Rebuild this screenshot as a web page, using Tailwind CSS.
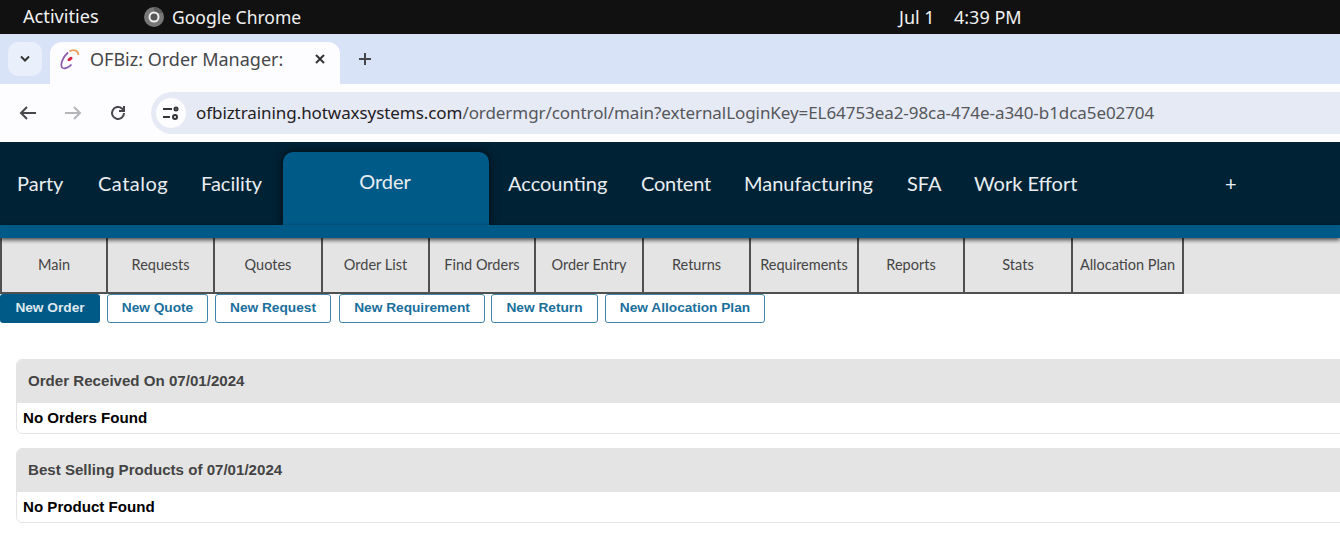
<!DOCTYPE html>
<html lang="en">
<head>
  <meta charset="UTF-8" />
  <title>OFBiz: Order Manager</title>
  <script src="https://cdn.jsdelivr.net/npm/@tailwindcss/browser@4"></script>
</head>
<body class="bg-white w-[1340px] h-[545px] overflow-hidden font-['Liberation_Sans',sans-serif]">

  <!-- DESKTOP TOP BAR -->
  <div class="h-[34px] bg-[#111111] flex items-center text-[#f2f2f2] text-[18px] font-['Noto_Sans',sans-serif]">
    <span class="ml-[23px] w-[121px] text-[18.200px]">Activities</span>
    <svg width="20" height="20" viewBox="0 0 20 20">
      <circle cx="10" cy="10" r="10" fill="#777777"/>
      <path d="M10 0a10 10 0 0 1 9 6h-9z" fill="#5c5c5c"/>
      <circle cx="10" cy="10" r="4.500" fill="#555555" stroke="#eeeeee" stroke-width="2"/>
    </svg>
    <span class="ml-[8px] w-[727px] text-[17.500px]">Google Chrome</span>
    <span class="whitespace-pre w-[55px]">Jul 1</span>
    <span>4:39 PM</span>
  </div>

  <!-- TAB STRIP -->
  <div class="h-[50px] bg-[#d9e3f8] flex items-end font-['Noto_Sans',sans-serif]">
    <div class="w-[34px] h-[34px] ml-[8px] mb-[8px] rounded-[10px] bg-[#e9effb] flex items-center justify-center">
      <svg width="12" height="8" viewBox="0 0 12 8" fill="none" stroke="#333" stroke-width="2"><path d="M2 1.500l4 4 4-4"/></svg>
    </div>
    <div class="w-[290px] h-[42px] ml-[8px] pb-[8px] rounded-t-[12px] bg-[#fdfcff] flex items-center pl-[10px]">
      <svg width="20" height="21" viewBox="0 0 20 21" fill="none" stroke-width="1.700">
        <path d="M9.500 2.500C12 0.500 18 0.500 18.500 6" stroke="#ec9a55"/>
        <path d="M8 3.500C3 8 0 15 2 18.500 4 20.500 9 18.500 11.500 15.500" stroke="#8d5bad"/>
        <ellipse cx="10" cy="10" rx="2.800" ry="1.600" transform="rotate(-35 10 10)" fill="#d4213d" stroke="none"/>
      </svg>
      <span class="ml-[10px] text-[18px] text-[#45474a] w-[224px] whitespace-nowrap">OFBiz: Order Manager:</span>
      <svg width="12" height="12" viewBox="0 0 12 12" fill="none" stroke="#333" stroke-width="2"><path d="M2 2l8 8M10 2l-8 8"/></svg>
    </div>
    <svg class="ml-[18px] mb-[18px]" width="14" height="14" viewBox="0 0 14 14" fill="none" stroke="#45474a" stroke-width="2"><path d="M7 1v12M1 7h12"/></svg>
  </div>

  <!-- ADDRESS BAR -->
  <div class="h-[58px] bg-[#fdfcff] flex items-center font-['Noto_Sans',sans-serif]">
    <svg class="ml-[19px]" width="18" height="16" viewBox="0 0 18 16" fill="none" stroke="#45474a" stroke-width="2"><path d="M17 8H2M8 2L2 8l6 6"/></svg>
    <svg class="ml-[27px]" width="18" height="16" viewBox="0 0 18 16" fill="none" stroke="#b5b6ba" stroke-width="2"><path d="M1 8h15M10 2l6 6-6 6"/></svg>
    <svg class="ml-[27px]" width="18" height="18" viewBox="0 0 18 18" fill="none" stroke="#45474a" stroke-width="2"><path d="M15 9a6 6 0 1 1-2-4.500L15 6.500"/><path d="M15 2v5h-5"/></svg>
    <div class="ml-[24px] w-[1189px] h-[42px] rounded-l-full bg-[#e6eaf5] flex items-center pl-[5px]">
      <span class="w-[30px] h-[30px] rounded-full bg-[#fdfcff] flex items-center justify-center">
        <svg width="16" height="14" viewBox="0 0 16 14" fill="none" stroke="#333" stroke-width="2"><path d="M0 3h9M0 11h7"/><circle cx="13" cy="3" r="1.500"/><circle cx="12" cy="11" r="2"/></svg>
      </span>
      <span class="ml-[10px] text-[17px] tracking-[-0.07px] text-[#55575b] whitespace-nowrap"><span class="text-[#1f2023]">ofbiztraining.hotwaxsystems.com</span>/ordermgr/control/main?externalLoginKey=EL64753ea2-98ca-474e-a340-b1dca5e02704</span>
    </div>
  </div>

  <!-- MAIN NAV -->
  <nav class="h-[83px] pl-[17px] bg-[#002235] flex text-[20px] text-[#e8eef2] font-['Lato',sans-serif]">
    <a class="w-[81px] pt-[26px]">Party</a>
    <a class="w-[103px] pt-[26px] tracking-[0.5px]">Catalog</a>
    <a class="w-[82px] pt-[26px]">Facility</a>
    <a class="mt-[10px] w-[206px] h-[73px] pr-[2px] bg-[#005a87] rounded-t-[10px] text-center pt-[14px] shadow-[0_0_10px_rgba(0,0,0,0.7)]">Order</a>
    <a class="ml-[19px] w-[133px] pt-[26px]">Accounting</a>
    <a class="w-[103px] pt-[26px] tracking-[-0.2px]">Content</a>
    <a class="w-[163px] pt-[26px]">Manufacturing</a>
    <a class="w-[67px] pt-[26px]">SFA</a>
    <a class="w-[251px] pt-[26px]">Work Effort</a>
    <a class="pt-[26px]">+</a>
  </nav>
  <div class="h-[13px] bg-[#005a87] relative z-10 shadow-[0_2px_4px_rgba(0,0,0,0.7)]"></div>

  <!-- SUB NAV -->
  <div class="h-[56px] bg-[#e4e4e4] flex text-[14.500px] text-[#444444] font-['Lato',sans-serif]">
    <a class="w-[108px] border-x-2 border-b-2 border-[#505050] flex items-center justify-center">Main</a>
    <a class="w-[107px] border-r-2 border-b-2 border-[#505050] flex items-center justify-center">Requests</a>
    <a class="w-[108px] border-r-2 border-b-2 border-[#505050] flex items-center justify-center">Quotes</a>
    <a class="w-[107px] border-r-2 border-b-2 border-[#505050] flex items-center justify-center">Order List</a>
    <a class="w-[106px] border-r-2 border-b-2 border-[#505050] flex items-center justify-center">Find Orders</a>
    <a class="w-[108px] border-r-2 border-b-2 border-[#505050] flex items-center justify-center">Order Entry</a>
    <a class="w-[107px] border-r-2 border-b-2 border-[#505050] flex items-center justify-center">Returns</a>
    <a class="w-[108px] border-r-2 border-b-2 border-[#505050] flex items-center justify-center">Requirements</a>
    <a class="w-[106px] border-r-2 border-b-2 border-[#505050] flex items-center justify-center">Reports</a>
    <a class="w-[108px] border-r-2 border-b-2 border-[#505050] flex items-center justify-center">Stats</a>
    <a class="w-[111px] border-r-2 border-b-2 border-[#505050] flex items-center justify-center">Allocation Plan</a>
  </div>

  <!-- ACTION BUTTONS -->
  <div class="h-[29px] flex text-[13.700px] font-bold text-[#1a6f9c]">
    <a class="w-[100px] rounded-[3px] bg-[#005a87] text-[#dfe9ef] pb-[1px] flex items-center justify-center">New Order</a>
    <a class="ml-[7px] w-[101px] rounded-[3px] border border-[#3f86aa] pb-[1px] flex items-center justify-center">New Quote</a>
    <a class="ml-[7px] w-[116px] rounded-[3px] border border-[#3f86aa] pb-[1px] flex items-center justify-center">New Request</a>
    <a class="ml-[8px] w-[146px] rounded-[3px] border border-[#3f86aa] pb-[1px] flex items-center justify-center">New Requirement</a>
    <a class="ml-[6px] w-[107px] rounded-[3px] border border-[#3f86aa] pb-[1px] flex items-center justify-center">New Return</a>
    <a class="ml-[7px] w-[160px] rounded-[3px] border border-[#3f86aa] pb-[1px] flex items-center justify-center">New Allocation Plan</a>
  </div>

  <!-- CARDS -->
  <div class="ml-[16px] mt-[36px] w-[1340px] flex flex-col gap-[14px]">
    <div class="h-[75px] rounded-[6px] border border-[#e4e4e4] overflow-hidden">
      <div class="h-[43px] bg-[#e4e4e4] flex items-center pl-[11px] text-[15.100px] font-bold text-[#444444]">Order Received On 07/01/2024</div>
      <div class="pl-[6px] pt-[4px] text-[15.100px] font-bold text-black">No Orders Found</div>
    </div>
    <div class="h-[75px] rounded-[6px] border border-[#e4e4e4] overflow-hidden">
      <div class="h-[43px] bg-[#e4e4e4] flex items-center pl-[11px] text-[15.100px] font-bold text-[#444444]">Best Selling Products of 07/01/2024</div>
      <div class="pl-[6px] pt-[4px] text-[15.100px] font-bold text-black">No Product Found</div>
    </div>
  </div>
</body>
</html>
